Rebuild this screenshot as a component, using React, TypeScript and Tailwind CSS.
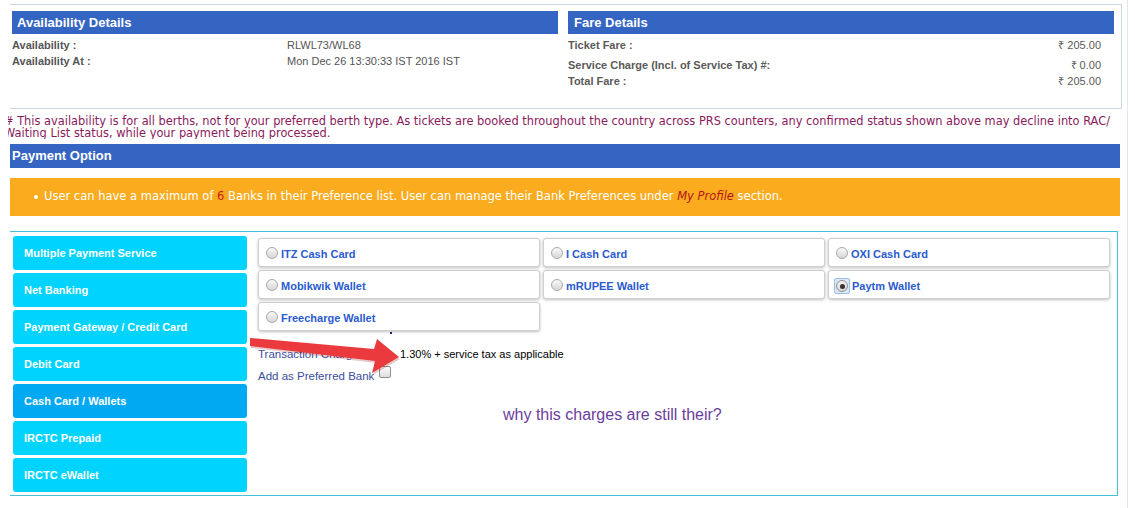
import React from 'react';

const tabs = [
	'Multiple Payment Service',
	'Net Banking',
	'Payment Gateway / Credit Card',
	'Debit Card',
	'Cash Card / Wallets',
	'IRCTC Prepaid',
	'IRCTC eWallet',
];

const wallets = [
	'ITZ Cash Card',
	'I Cash Card',
	'OXI Cash Card',
	'Mobikwik Wallet',
	'mRUPEE Wallet',
	'Paytm Wallet',
	'Freecharge Wallet',
];

const Radio = ({ checked }: { checked?: boolean }) => {
	if (checked) {
		return (
			<span className="-ml-[2px] -mr-[1px] flex h-[16px] w-[16px] shrink-0 items-center justify-center rounded-[2px] border border-[#9cbde6] bg-[#dbe8f8]">
				<span className="flex h-[12px] w-[12px] items-center justify-center rounded-full border border-[#8f8f8f] bg-gradient-to-b from-[#f4f4f4] to-[#d8d8d8]">
					<span className="block h-[5px] w-[5px] rounded-full bg-[#333]" />
				</span>
			</span>
		);
	}
	return (
		<span className="-mt-[3px] block h-[12px] w-[12px] shrink-0 rounded-full border border-[#a9a9a9] bg-gradient-to-b from-[#fafafa] to-[#d6d6d6]" />
	);
};

const Arrow = () => (
	<svg className="pointer-events-none absolute left-0 top-0" width="1135" height="508">
		<polygon
			points="250,338 374,349 377,339 399,357 372,373 375,361 250,346"
			fill="#9a2a2a"
			opacity="0.25"
			transform="translate(1,2)"
		/>
		<polygon points="250,338 374,349 377,339 399,357 372,373 375,361 250,346" fill="#ea3a3d" />
	</svg>
);

export default function App() {
	return (
		<div className="relative h-[508px] w-[1135px] overflow-hidden bg-white font-['Liberation_Sans',Arial,sans-serif]">
			<div className="h-full w-[1128px] border-r border-[#e1e7ee] pt-[4px]">
				{/* availability / fare */}
				<div className="ml-[10px] flex h-[105px] w-[1112px] border-b border-r border-t border-[#c9d7e6] pt-[6px]">
					<div className="ml-[2px] w-[546px]">
						<div className="h-[23px] bg-[#3565c2] pl-[5px] text-[13px] font-bold leading-[23px] text-white">
							Availability Details
						</div>
						<div className="mt-[3px] text-[11px] leading-[16px] text-[#555]">
							<div className="flex">
								<span className="w-[275px] font-bold">Availability :</span>
								<span>RLWL73/WL68</span>
							</div>
							<div className="flex">
								<span className="w-[275px] font-bold">Availability At :</span>
								<span>Mon Dec 26 13:30:33 IST 2016 IST</span>
							</div>
						</div>
					</div>
					<div className="ml-[10px] w-[546px]">
						<div className="h-[23px] bg-[#3565c2] pl-[6px] text-[13px] font-bold leading-[23px] text-white">
							Fare Details
						</div>
						<div className="mt-[3px] pr-[13px] text-[11px] leading-[16px] text-[#5a5a5a]">
							<div className="flex justify-between">
								<span className="font-bold">Ticket Fare :</span>
								<span>₹ 205.00</span>
							</div>
							<div className="mt-[4px] flex justify-between">
								<span className="font-bold">Service Charge (Incl. of Service Tax) #:</span>
								<span>₹ 0.00</span>
							</div>
							<div className="flex justify-between">
								<span className="font-bold">Total Fare :</span>
								<span>₹ 205.00</span>
							</div>
						</div>
					</div>
				</div>

				{/* note, left edge cut off as in the page */}
				<div className="ml-[8px] mt-[6px] overflow-hidden">
					<p className="-ml-[4px] w-[1120px] whitespace-nowrap font-['DejaVu_Sans',Verdana,sans-serif] text-[11.4px] leading-[12px] text-[#8b1a5c]">
						# This availability is for all berths, not for your preferred berth type. As tickets are booked throughout the country across PRS counters, any confirmed status shown above may decline into RAC/
						<br />
						Waiting List status, while your payment being processed.
					</p>
				</div>

				<div className="ml-[10px] mt-[5px] h-[24px] w-[1110px] bg-[#3565c2] pl-[2px] text-[13px] font-bold leading-[24px] text-white">
					Payment Option
				</div>

				<div className="ml-[10px] mt-[10px] flex h-[38px] w-[1110px] items-center bg-[#faab1e] pl-[24px] font-['DejaVu_Sans',Verdana,sans-serif] text-[11.5px] text-white">
					<span className="mr-[6px] block h-[4px] w-[4px] rounded-full bg-white" />
					<span>
						User can have a maximum of <span className="text-[#cc1b1b]">6</span> Banks in their Preference list. User can manage their Bank Preferences under{' '}
						<span className="italic text-[#b5161b]">My Profile</span> section.
					</span>
				</div>

				{/* payment box */}
				<div className="ml-[10px] mt-[15px] flex h-[265px] w-[1108px] border-b border-r border-t border-[#45c1da] pt-[4px]">
					<div className="ml-[3px] flex w-[234px] flex-col gap-[3px]">
						{tabs.map((t) => (
							<div
								key={t}
								className={`flex h-[34px] items-center rounded-[3px] pl-[11px] text-[11px] font-bold text-white ${
									t === 'Cash Card / Wallets' ? 'bg-[#00a9f2]' : 'bg-[#00d4fe]'
								}`}
							>
								{t}
							</div>
						))}
					</div>

					<div className="ml-[11px] flex-1 pt-[2px]">
						<div className="grid w-[852px] grid-cols-3 gap-[3px]">
							{wallets.map((w) => (
								<div
									key={w}
									className="flex h-[29px] items-center gap-[3px] rounded-[3px] border border-[#cfcfcf] bg-white pl-[7px] pt-[3px] shadow-[0_1px_3px_rgba(0,0,0,0.25)]"
								>
									<Radio checked={w === 'Paytm Wallet'} />
									<span className="text-[11px] font-bold text-[#2a5bd0]">{w}</span>
								</div>
							))}
						</div>

						<div className="ml-[132px] mt-[1px] h-[2px] w-[2px] bg-[#1a1a8a]" />

						<div className="mt-[12px] flex leading-[16px]">
							<span className="w-[142px] text-[11.5px] text-[#3b4da0]">Transaction Charge :</span>
							<span className="text-[11px] text-black">1.30% + service tax as applicable</span>
						</div>

						<div className="mt-[6px] flex items-center text-[11.5px] leading-[16px] text-[#3b4da0]">
							<span>Add as Preferred Bank</span>
							<span className="-mt-[8px] ml-[5px] block h-[12px] w-[12px] rounded-[2px] border border-[#8f8f8f] bg-gradient-to-b from-[#fcfcfc] to-[#dcdcdc]" />
						</div>

						<div className="ml-[245px] mt-[22px] text-[16px] leading-[18px] text-[#6b3d9e]">
							why this charges are still their?
						</div>
					</div>
				</div>
			</div>
			<Arrow />
		</div>
	);
}
